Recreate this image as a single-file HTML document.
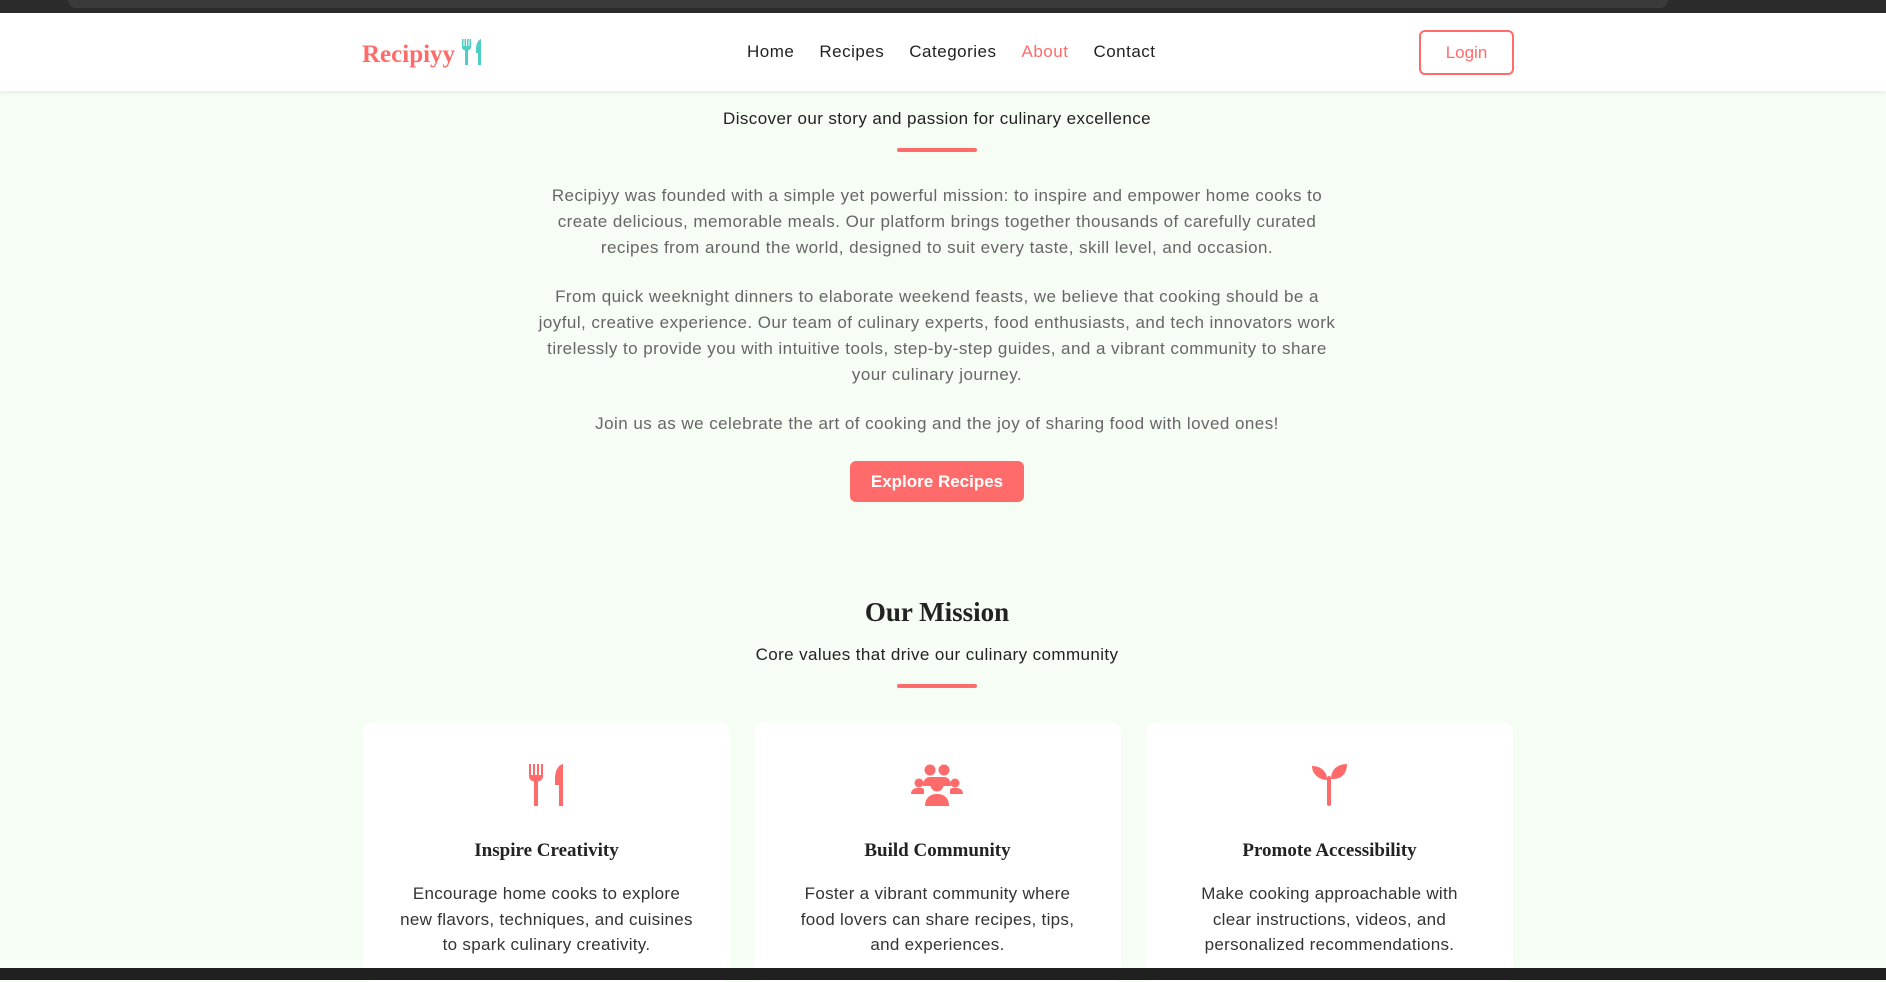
<!DOCTYPE html>
<html><head><meta charset="utf-8"><style>
*{margin:0;padding:0;box-sizing:border-box}
body{width:1886px;height:980px;overflow:hidden;background:#f6fdf5;font-family:"Liberation Sans",sans-serif;position:relative}
.top{position:absolute;left:0;top:0;width:1886px;height:13px;background:#2b2b2b}
.top .bar{position:absolute;left:68px;top:0;width:1600px;height:8px;background:#3a3a3a;border-radius:0 0 8px 8px}
nav{position:absolute;left:0;top:13px;width:1886px;height:78px;background:#fff;box-shadow:0 2px 4px rgba(0,0,0,.06)}
.logo{position:absolute;left:362px;top:26px;font-family:"Liberation Serif",serif;font-weight:bold;font-size:25px;color:#ff6b6b}
.links{position:absolute;top:29px;left:747px;font-size:17px;color:#222;letter-spacing:.5px}
.links span{margin-right:25px}
.login{position:absolute;left:1419px;top:17px;width:95px;height:45px;border:2px solid #ff6b6b;border-radius:6px;color:#ff6b6b;font-size:17px;text-align:center;line-height:41px}
.c{position:absolute;left:0;width:1874px;text-align:center}
.sub{font-size:17px;color:#222;letter-spacing:.4px}
.rb{position:absolute;left:897px;width:80px;height:4px;background:#ff6b6b;border-radius:2px}
.p{font-size:17px;color:#666;line-height:26px;width:800px;left:537px;letter-spacing:.45px}
.btn{position:absolute;left:850px;top:461px;width:174px;height:41px;background:#ff6b6b;border-radius:6px;color:#fff;font-weight:bold;font-size:17px;text-align:center;line-height:41px}
h2{font-family:"Liberation Serif",serif;font-size:27px;color:#222}
.card{position:absolute;top:722px;width:367px;height:260px;background:#fff;border-radius:10px;text-align:center}
.card svg{position:absolute;top:42px;left:163px}
.card h3{position:absolute;top:118px;width:100%;font-family:"Liberation Serif",serif;font-size:19px;color:#222}
.card p{position:absolute;top:159px;left:37px;width:293px;font-size:17px;line-height:25.5px;color:#333;letter-spacing:.3px}
.task{position:absolute;left:0;top:968px;width:1886px;height:12px;background:#202020}
</style></head><body>
<div class="top"><div class="bar"></div></div>
<nav>
<div class="logo">Recipiyy <svg width="22" height="26" viewBox="0 0 22 26" style="vertical-align:-3px"><path d="M1 0v8c0 2 1.5 3 3 3.3V26h3V11.3C8.5 11 10 10 10 8V0H8.5v7h-1V0H6v7H5V0H3.5v7h-1V0z" fill="#4ecdc4"/><path d="M20 0c-3 1-5 5-5 10v4h2v12h3z" fill="#4ecdc4"/></svg></div>
<div class="links"><span>Home</span><span>Recipes</span><span>Categories</span><span style="color:#ff6b6b">About</span><span>Contact</span></div>
<div class="login">Login</div>
</nav>
<div class="c sub" style="top:109px">Discover our story and passion for culinary excellence</div>
<div class="rb" style="top:148px"></div>
<div class="c p" style="top:183px">Recipiyy was founded with a simple yet powerful mission: to inspire and empower home cooks to create delicious, memorable meals. Our platform brings together thousands of carefully curated recipes from around the world, designed to suit every taste, skill level, and occasion.</div>
<div class="c p" style="top:284px">From quick weeknight dinners to elaborate weekend feasts, we believe that cooking should be a joyful, creative experience. Our team of culinary experts, food enthusiasts, and tech innovators work tirelessly to provide you with intuitive tools, step-by-step guides, and a vibrant community to share your culinary journey.</div>
<div class="c p" style="top:411px">Join us as we celebrate the art of cooking and the joy of sharing food with loved ones!</div>
<div class="btn">Explore Recipes</div>
<h2 class="c" style="top:597px">Our Mission</h2>
<div class="c sub" style="top:645px">Core values that drive our culinary community</div>
<div class="rb" style="top:684px"></div>
<div class="card" style="left:363px"><svg width="40" height="42" viewBox="0 0 40 42"><path d="M3 0v12c0 3 2 5 5 5.5V42h4V17.5c3-.5 5-2.5 5-5.5V0h-2v11h-2V0h-2v11h-2V0H7v11H5V0z" fill="#ff6b6b"/><path d="M37 0c-5 1-8 7-8 15v6h4v21h4z" fill="#ff6b6b"/></svg><h3>Inspire Creativity</h3><p>Encourage home cooks to explore new flavors, techniques, and cuisines to spark culinary creativity.</p></div>
<div class="card" style="left:754px"><svg width="52" height="42" viewBox="0 0 52 42" style="left:157px"><circle cx="19" cy="6" r="5.5" fill="#ff6b6b"/><circle cx="33" cy="6" r="5.5" fill="#ff6b6b"/><circle cx="26" cy="21" r="6.5" fill="#ff6b6b"/><circle cx="8" cy="19" r="4.5" fill="#ff6b6b"/><circle cx="44" cy="19" r="4.5" fill="#ff6b6b"/><path d="M12 22c0-6 3-9 7-9h14c4 0 7 3 7 9z" fill="#ff6b6b"/><path d="M0 30c0-4 3-6 6-6h4c2 0 3 1 3 2v4z" fill="#ff6b6b"/><path d="M52 30c0-4-3-6-6-6h-4c-2 0-3 1-3 2v4z" fill="#ff6b6b"/><path d="M14 42c0-8 5-12 12-12s12 4 12 12z" fill="#ff6b6b"/></svg><h3>Build Community</h3><p>Foster a vibrant community where food lovers can share recipes, tips, and experiences.</p></div>
<div class="card" style="left:1146px"><svg width="40" height="42" viewBox="0 0 40 42"><path d="M3 2c8 0 15 5 15 13v1C10 16 3 10 3 2z" fill="#ff6b6b"/><path d="M38 0c0 9-5 15-14 15h-2C22 6 28 0 38 0z" fill="#ff6b6b"/><rect x="18" y="12" width="4" height="30" rx="2" fill="#ff6b6b"/></svg><h3>Promote Accessibility</h3><p>Make cooking approachable with clear instructions, videos, and personalized recommendations.</p></div>
<div class="task"></div>
</body></html>
